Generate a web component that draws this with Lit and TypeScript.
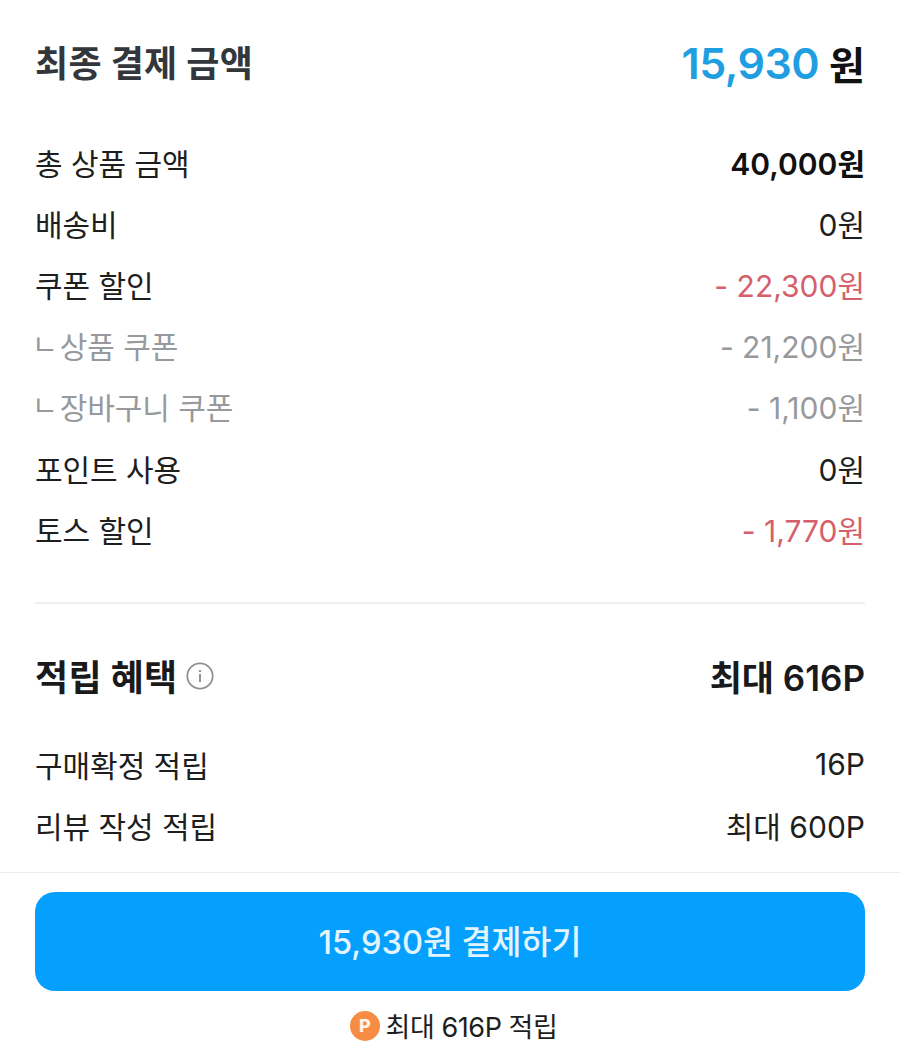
import {LitElement, html, css} from 'lit';
import {customElement} from 'lit/decorators.js';

type Row = {label: string; value: string; kind?: string; sub?: boolean};

const priceRows: Row[] = [
  {label: '총 상품 금액', value: '40,000원', kind: 'strong'},
  {label: '배송비', value: '0원'},
  {label: '쿠폰 할인', value: '- 22,300원', kind: 'minus'},
  {label: '상품 쿠폰', value: '- 21,200원', kind: 'muted', sub: true},
  {label: '장바구니 쿠폰', value: '- 1,100원', kind: 'muted', sub: true},
  {label: '포인트 사용', value: '0원'},
  {label: '토스 할인', value: '- 1,770원', kind: 'minus'},
];

const pointRows: Row[] = [
  {label: '구매확정 적립', value: '16P'},
  {label: '리뷰 작성 적립', value: '최대 600P'},
];

@customElement('app-root')
export class AppRoot extends LitElement {
  static styles = css`
    :host {
      display: block;
      width: 900px;
      height: 1064px;
      background: #fff;
      color: #1d1e20;
      font-family: Inter, 'Noto Sans CJK KR', sans-serif;
      overflow: hidden;
    }

    .content {
      height: 872px;
      box-sizing: border-box;
      padding: 28px 35px 0 35px;
    }

    .row {
      display: flex;
      justify-content: space-between;
      align-items: center;
    }

    .total {
      height: 70px;
      font-size: 36px;
      font-weight: 700;
      color: #33363a;
    }

    .total-label {
      padding-bottom: 4px;
      letter-spacing: 0.3px;
    }

    .total-value {
      display: flex;
      align-items: center;
      gap: 10px;
      font-size: 39px;
      color: #111;
    }

    .total-value b {
      font-size: 43px;
      font-weight: 600;
      color: #1f9fe2;
      letter-spacing: -0.5px;
    }

    .rows {
      margin-top: 33px;
    }

    .line {
      height: 61.2px;
      font-size: 30px;
      letter-spacing: -0.05px;
    }

    .line .value {
      letter-spacing: 0;
    }

    .strong .value {
      font-weight: 600;
      color: #111;
    }

    .minus .value {
      color: #d5606c;
    }

    .muted {
      color: #97999c;
    }

    .tick {
      font-size: 28px;
      line-height: 1;
      margin: 0 2px 0 -3px;
      vertical-align: 3px;
    }

    .divider {
      height: 2px;
      margin-top: 43px;
      background: #eeeeee;
    }

    .points-head {
      height: 44px;
      margin-top: 49px;
      font-size: 36px;
      font-weight: 700;
      color: #1a1a1c;
    }

    .points-title {
      display: flex;
      align-items: center;
      gap: 8px;
      letter-spacing: 0.3px;
    }

    .points-head .max {
      font-size: 35px;
      font-weight: 600;
    }

    .info {
      display: block;
      width: 28px;
      height: 28px;
      margin-top: 2px;
    }

    .points {
      margin-top: 36px;
    }

    .footer {
      height: 192px;
      box-sizing: border-box;
      border-top: 1px solid #ebebeb;
      padding: 19px 35px 0;
    }

    .pay {
      display: flex;
      align-items: center;
      justify-content: center;
      width: 100%;
      height: 99px;
      padding: 0 0 5px;
      border: 0;
      border-radius: 20px;
      background: #059ffd;
      color: #e2f5ff;
      font-family: inherit;
      font-size: 32.6px;
      font-weight: 500;
    }

    .earn {
      display: flex;
      align-items: center;
      justify-content: center;
      gap: 6px;
      margin-top: 15px;
      padding-left: 7px;
      font-size: 27px;
      letter-spacing: -0.45px;
      color: #1d1e20;
    }

    .badge {
      display: flex;
      align-items: center;
      justify-content: center;
      width: 30px;
      height: 30px;
      border-radius: 50%;
      background: #f78c45;
      color: #fff3e6;
      font-size: 18px;
      font-weight: 800;
    }
  `;

  renderRow(row: Row) {
    const cls = `row line ${row.kind || ''}`;
    return html`
      <div class=${cls}>
        <span>${row.sub ? html`<span class="tick">ㄴ</span>` : ''}${row.label}</span>
        <span class="value">${row.value}</span>
      </div>
    `;
  }

  render() {
    return html`
      <div class="content">
        <div class="row total">
          <span class="total-label">최종 결제 금액</span>
          <span class="total-value"><b>15,930</b>원</span>
        </div>

        <div class="rows">${priceRows.map((row) => this.renderRow(row))}</div>

        <div class="divider"></div>

        <div class="row points-head">
          <span class="points-title">
            적립 혜택
            <svg class="info" viewBox="0 0 28 28" fill="none">
              <circle cx="14" cy="14" r="12.7" stroke="#8f9193" stroke-width="1.8"/>
              <rect x="13" y="12" width="2" height="8" fill="#8f9193"/>
              <rect x="13" y="8" width="2" height="2" fill="#8f9193"/>
            </svg>
          </span>
          <span class="max">최대 616P</span>
        </div>

        <div class="points">${pointRows.map((row) => this.renderRow(row))}</div>
      </div>

      <div class="footer">
        <button class="pay">15,930원 결제하기</button>
        <div class="earn"><span class="badge">P</span>최대 616P 적립</div>
      </div>
    `;
  }
}
